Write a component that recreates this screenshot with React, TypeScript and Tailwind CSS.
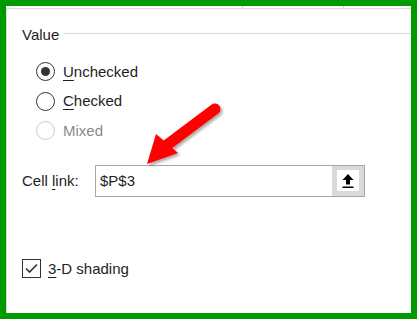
import React from "react";

const font = { fontFamily: '"Liberation Sans", Arial, sans-serif' };

function Radio({ checked, disabled, label, u }: { checked?: boolean; disabled?: boolean; label: string; u: string }) {
  const rest = label.slice(1);
  return (
    <div className="flex h-[29.5px] items-center">
      <div
        className={`flex h-[19px] w-[19px] items-center justify-center rounded-full border ${disabled ? "border-[#cccccc]" : "border-[#333333]"}`}
      >
        {checked && <div className="h-[9px] w-[9px] rounded-full bg-[#333333]" />}
      </div>
      <span className={`ml-[8px] leading-[20px] ${disabled ? "text-[#8a8a8a]" : "text-[#1e1e1e]"}`}>
        {u ? <span className="underline underline-offset-[3px] decoration-1">{label[0]}</span> : label[0]}
        {rest}
      </span>
    </div>
  );
}

export default function App() {
  return (
    <div className="relative h-[319px] w-[417px] overflow-hidden bg-white text-[15px]" style={font}>
      <div className="flex h-full w-full flex-col border-[6px] border-[#009900] bg-white">
        <div className="flex h-[2px] shrink-0">
          <div className="ml-[236px] w-px bg-[#d4d4d4]" />
          <div className="ml-[100px] w-px bg-[#d4d4d4]" />
        </div>
        <div className="flex flex-1 flex-col border-l border-t border-[#d9d9d9] pl-[15px] pt-[16px]">
          <div className="flex h-[20px] items-center">
            <span className="leading-[20px] text-[#1e1e1e]">Value</span>
            <div className="mb-[3px] ml-[5px] h-px flex-1 bg-[#d9d9d9]" />
          </div>
          <div className="ml-[14px] mt-[12px] flex flex-col">
            <Radio checked label="Unchecked" u="U" />
            <Radio label="Checked" u="C" />
            <Radio disabled label="Mixed" u="" />
          </div>
          <div className="mt-[19px] flex h-[32px] items-center">
            <span className="w-[73px] leading-[20px] text-[#1e1e1e]">
              Cell <span className="underline underline-offset-[3px] decoration-1">l</span>ink:
            </span>
            <div className="flex h-[32px] w-[270px] items-stretch border border-[#a6a6a6] bg-white">
              <div className="flex flex-1 items-center pl-[4px] leading-[20px] text-[#1e1e1e]">$P$3</div>
              <div className="flex w-[32px] items-center justify-center bg-[#d9d9d9]">
                <div className="flex h-[21px] w-[22px] items-center justify-center bg-white">
                  <svg width="14" height="16" viewBox="0 0 14 16">
                    <path d="M7 1 L12.5 7 L9 7 L9 11.5 L5 11.5 L5 7 L1.5 7 Z" fill="#000" />
                    <rect x="1.5" y="13.5" width="11" height="1.5" fill="#000" />
                  </svg>
                </div>
              </div>
            </div>
          </div>
          <div className="mt-[62px] flex h-[20px] items-center">
            <div className="flex h-[19px] w-[19px] items-center justify-center border border-[#333333] bg-white">
              <svg width="15" height="15" viewBox="0 0 15 15">
                <path d="M2 7.5 L5.5 11 L13 3.5" fill="none" stroke="#333333" strokeWidth="1.6" />
              </svg>
            </div>
            <span className="ml-[7px] leading-[20px] text-[#1e1e1e]">
              <span className="underline underline-offset-[3px] decoration-1">3</span>-D shading
            </span>
          </div>
        </div>
      </div>
      <svg className="pointer-events-none absolute left-0 top-0" width="417" height="319" viewBox="0 0 417 319">
        <defs>
          <filter id="sh" x="-20%" y="-20%" width="150%" height="150%">
            <feDropShadow dx="2" dy="2" stdDeviation="1.5" floodColor="#000" floodOpacity="0.35" />
          </filter>
        </defs>
        <g filter="url(#sh)">
          <line x1="215" y1="109" x2="167" y2="145" stroke="#ff0000" strokeWidth="11" strokeLinecap="round" />
          <path d="M147 164 L156 134 L178 153 Z" fill="#ff0000" />
        </g>
      </svg>
    </div>
  );
}
